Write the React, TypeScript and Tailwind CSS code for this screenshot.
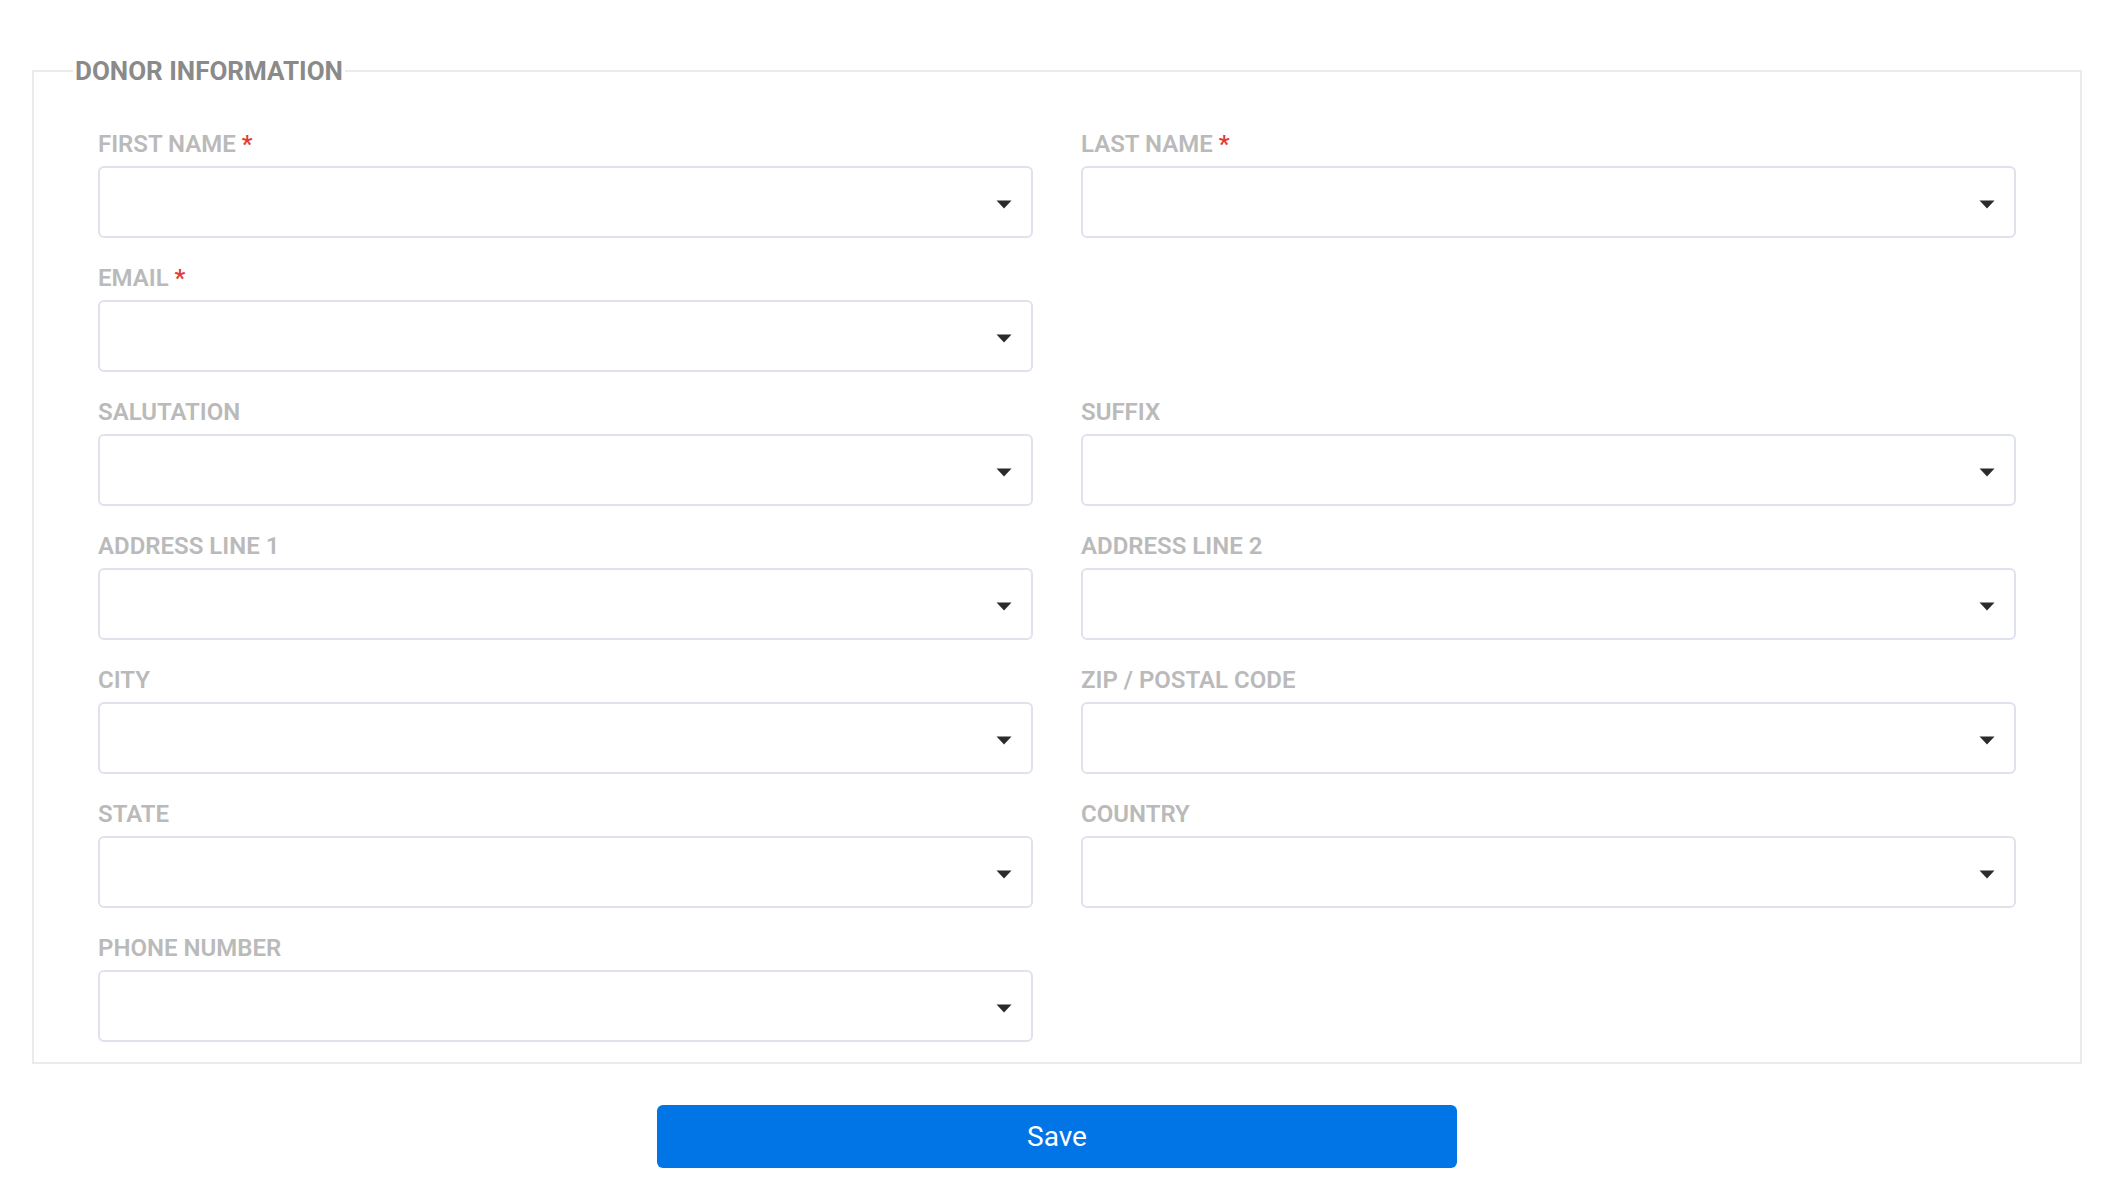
import React from 'react'

interface FieldProps {
  label: string
  required?: boolean
}

function Caret() {
  return (
    <svg width="16" height="9" viewBox="0 0 16 9" className="mt-1 shrink-0">
      <path d="M0.5 0.5 L15.5 0.5 L8 8.5 Z" fill="#2b2b2b" />
    </svg>
  )
}

function Field(props: FieldProps) {
  return (
    <div className="flex flex-col">
      <label className="mb-2 text-[24px] font-semibold uppercase leading-[28px] text-[#bababa]">
        {props.label}
        {props.required && <span className="text-[#e53935]"> *</span>}
      </label>
      <div className="flex h-[72px] items-center justify-end rounded-md border-2 border-[#dfe2ec] bg-white pr-[19px]">
        <Caret />
      </div>
    </div>
  )
}

export default function App() {
  return (
    <div className="min-h-screen bg-white pt-[56px] font-['Roboto',sans-serif]">
      <fieldset className="ml-8 w-[2050px] border-2 border-[#ebebeb]">
        <legend className="ml-[39px] px-[2px] text-[26px] font-bold uppercase leading-[30px] text-[#8a8a8a]">
          Donor Information
        </legend>
        <div className="grid grid-cols-2 gap-x-[48px] gap-y-[26px] px-16 pt-[44px] pb-[20px]">
          <Field label="First Name" required />
          <Field label="Last Name" required />
          <Field label="Email" required />
          <div />
          <Field label="Salutation" />
          <Field label="Suffix" />
          <Field label="Address Line 1" />
          <Field label="Address Line 2" />
          <Field label="City" />
          <Field label="Zip / Postal Code" />
          <Field label="State" />
          <Field label="Country" />
          <Field label="Phone Number" />
        </div>
      </fieldset>
      <div className="ml-8 mt-[41px] flex w-[2050px] justify-center">
        <button className="h-[63px] w-[800px] rounded-md bg-[#0275e6] text-[28px] text-white">
          Save
        </button>
      </div>
    </div>
  )
}
